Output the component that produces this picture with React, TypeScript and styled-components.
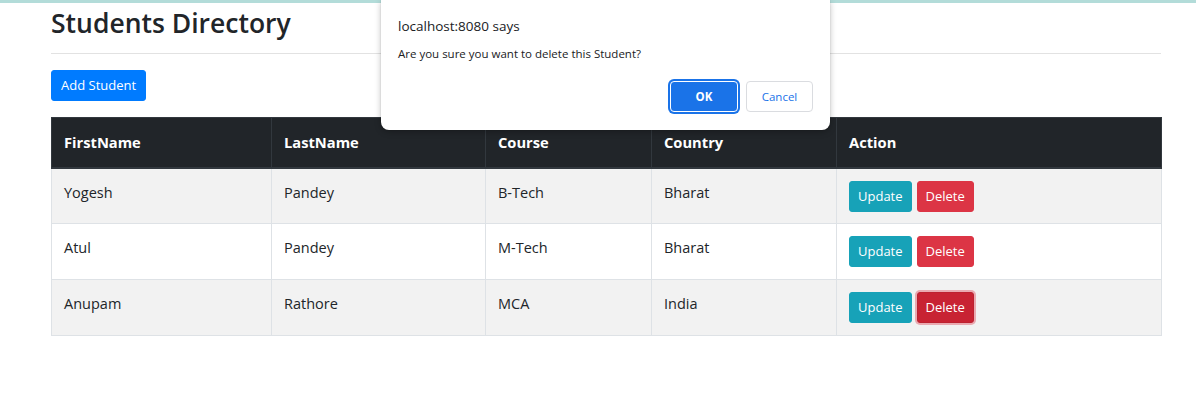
import React from "react";
import styled, { createGlobalStyle } from "styled-components";

const GlobalStyle = createGlobalStyle`
  * { box-sizing: border-box; }
  body {
    margin: 0;
    background: #fff;
    color: #212529;
    font-family: "Open Sans", "Noto Sans", sans-serif;
  }
`;

const Page = styled.div`
  position: relative;
  width: 1196px;
  height: 405px;
  overflow: hidden;
  background: #fff;
`;

const TopBar = styled.div`
  height: 3px;
  background: #b3dcd9;
`;

const Container = styled.div`
  width: 1110px;
  margin-left: 51px;
`;

const Title = styled.h2`
  margin: 0;
  padding-top: 2px;
  font-size: 26.5px;
  font-weight: 600;
  line-height: 36px;
  color: #212529;
`;

const Rule = styled.hr`
  margin: 12px 0 16px;
  border: 0;
  border-top: 1px solid #e2e2e2;
`;

type Variant = "primary" | "info" | "danger";

const colors: Record<Variant, string> = {
  primary: "#007bff",
  info: "#17a2b8",
  danger: "#dc3545",
};

const Button = styled.button<{ $variant: Variant; $focused?: boolean }>`
  display: inline-block;
  height: 31px;
  padding: 0 9px;
  border: 1px solid ${({ $variant, $focused }) => ($focused ? "#bd2130" : colors[$variant])};
  border-radius: 3px;
  background: ${({ $variant, $focused }) => ($focused ? "#c82333" : colors[$variant])};
  color: #fff;
  font-family: "Open Sans", "Noto Sans", sans-serif;
  font-size: 13px;
  line-height: 29px;
  cursor: pointer;
  box-shadow: ${({ $focused }) => ($focused ? "0 0 0 2px rgba(225, 83, 97, 0.45)" : "none")};
`;

const RowButton = styled(Button)`
  padding: 0 8px;
`;

const Table = styled.table`
  width: 100%;
  margin-top: 16px;
  border-collapse: collapse;
  table-layout: fixed;
  font-size: 14.5px;
`;

const HeadCell = styled.th`
  height: 50px;
  padding: 0 12px;
  background: #212529;
  color: #fff;
  text-align: left;
  font-weight: 700;
  font-size: 14.7px;
  border: 1px solid #32383e;
  border-bottom: 2px solid #32383e;
  vertical-align: middle;
`;

const Row = styled.tr<{ $striped: boolean }>`
  background: ${({ $striped }) => ($striped ? "#f2f2f2" : "#fff")};
`;

const Cell = styled.td`
  height: 56px;
  padding: 13px 12px 0;
  border: 1px solid #dee2e6;
  vertical-align: top;
  line-height: 22px;
  color: #212529;
`;

const ActionCell = styled(Cell)`
  padding-top: 12px;
`;

const Actions = styled.div`
  display: flex;
  gap: 5px;
`;

const Dialog = styled.div`
  position: absolute;
  top: 0;
  left: 381px;
  width: 449px;
  height: 130px;
  padding: 17px 17px 0;
  background: #fff;
  border-radius: 0 0 8px 8px;
  box-shadow: 0 2px 6px rgba(0, 0, 0, 0.25), 0 0 1px rgba(0, 0, 0, 0.3);
  font-family: "Open Sans", "Noto Sans", sans-serif;
`;

const DialogTitle = styled.div`
  font-size: 13.5px;
  line-height: 18px;
  color: #202124;
`;

const DialogMessage = styled.div`
  margin-top: 11px;
  font-size: 11.5px;
  line-height: 16px;
  color: #202124;
`;

const DialogButtons = styled.div`
  display: flex;
  justify-content: flex-end;
  gap: 8px;
  margin-top: 19px;
`;

const DialogButton = styled.button<{ $primary?: boolean }>`
  width: ${({ $primary }) => ($primary ? "68px" : "67px")};
  height: 31px;
  border-radius: 4px;
  font-family: "Open Sans", "Noto Sans", sans-serif;
  font-size: 11.5px;
  font-weight: ${({ $primary }) => ($primary ? 700 : 500)};
  cursor: pointer;
  background: ${({ $primary }) => ($primary ? "#1a73e8" : "#fff")};
  color: ${({ $primary }) => ($primary ? "#fff" : "#1a73e8")};
  border: 1px solid ${({ $primary }) => ($primary ? "#fff" : "#dadce0")};
  box-shadow: ${({ $primary }) => ($primary ? "0 0 0 2px #1a73e8" : "none")};
`;

const students = [
  { first: "Yogesh", last: "Pandey", course: "B-Tech", country: "Bharat" },
  { first: "Atul", last: "Pandey", course: "M-Tech", country: "Bharat" },
  { first: "Anupam", last: "Rathore", course: "MCA", country: "India" },
];

const widths = [220, 214, 166, 185, 325];
const headers = ["FirstName", "LastName", "Course", "Country", "Action"];

export default function App() {
  return (
    <Page>
      <GlobalStyle />
      <TopBar />
      <Container>
        <Title>Students Directory</Title>
        <Rule />
        <Button $variant="primary">Add Student</Button>
        <Table>
          <colgroup>
            {widths.map((w, i) => (
              <col key={i} style={{ width: w }} />
            ))}
          </colgroup>
          <thead>
            <tr>
              {headers.map((h) => (
                <HeadCell key={h}>{h}</HeadCell>
              ))}
            </tr>
          </thead>
          <tbody>
            {students.map((s, i) => (
              <Row key={s.first} $striped={i % 2 === 0}>
                <Cell>{s.first}</Cell>
                <Cell>{s.last}</Cell>
                <Cell>{s.course}</Cell>
                <Cell>{s.country}</Cell>
                <ActionCell>
                  <Actions>
                    <RowButton $variant="info">Update</RowButton>
                    <RowButton $variant="danger" $focused={i === 2}>
                      Delete
                    </RowButton>
                  </Actions>
                </ActionCell>
              </Row>
            ))}
          </tbody>
        </Table>
      </Container>
      <Dialog>
        <DialogTitle>localhost:8080 says</DialogTitle>
        <DialogMessage>Are you sure you want to delete this Student?</DialogMessage>
        <DialogButtons>
          <DialogButton $primary>OK</DialogButton>
          <DialogButton>Cancel</DialogButton>
        </DialogButtons>
      </Dialog>
    </Page>
  );
}
